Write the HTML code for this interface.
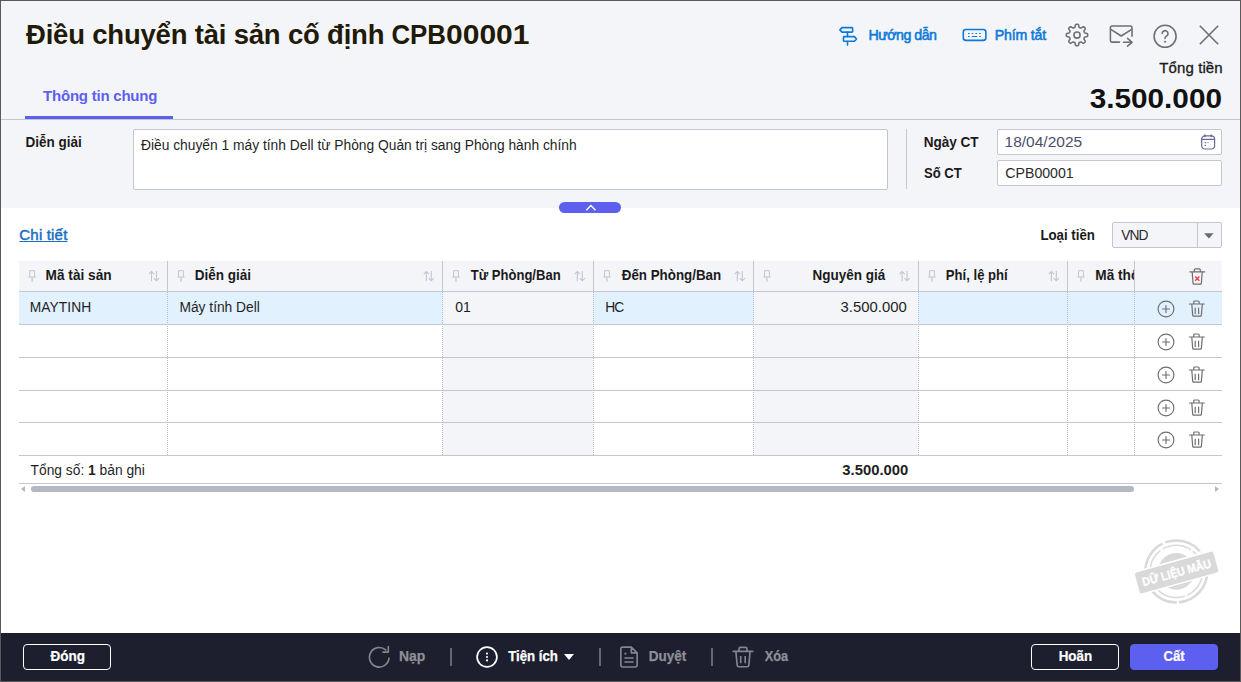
<!DOCTYPE html>
<html lang="vi">
<head>
<meta charset="utf-8">
<title>Điều chuyển tài sản cố định CPB00001</title>
<style>
*{box-sizing:border-box;margin:0;padding:0}
html,body{width:1241px;height:682px;overflow:hidden;background:#fff}
body{font-family:"Liberation Sans","DejaVu Sans",sans-serif;font-size:14px;color:#1f1f1f;position:relative}
#win{position:absolute;left:0;top:0;width:1241px;height:682px;overflow:hidden;background:#fff}
#frame{position:absolute;left:0;top:0;width:1241px;height:682px;border:1px solid #5a5a5a;z-index:50;pointer-events:none}
#hdr{position:absolute;left:0;top:0;width:1241px;height:208px;background:#f4f5f9}
.t{position:absolute;white-space:nowrap;line-height:20px;height:20px}
.b{font-weight:bold}
.r{text-align:right}
#title{left:26px;top:18px;font-size:27.5px;line-height:34px;height:34px;font-weight:bold;color:#1f1b08;letter-spacing:-0.2px}
#tc1{display:inline-block;transform:translateX(-0.6px) scaleX(0.94);transform-origin:left center;letter-spacing:0}
#tc2{display:inline-block;margin-left:-3.4px;transform:scaleX(1.092);transform-origin:left center;letter-spacing:0}
#tab{left:42px;top:86px;font-size:15px;color:#5d5fef;font-weight:bold;letter-spacing:-0.2px}
#tabline{position:absolute;left:25px;top:116px;width:148px;height:3px;background:#5d5fef}
#hline{position:absolute;left:0;top:119px;width:1241px;height:1px;background:#c5c7cf}
.link{color:#0b79d9;font-weight:normal;font-size:14.2px;-webkit-text-stroke:0.55px #0b79d9}
.inp{position:absolute;background:#fff;border:1px solid #c3c6d0;border-radius:2px}
.lbl{font-weight:bold;font-size:13.8px;color:#1a1a1a}
svg{position:absolute;overflow:visible}
/* grid */
#grid{position:absolute;left:19px;top:261px;width:1203px;height:194px}
.hc{position:absolute;top:0;height:30px;background:#f4f5f9;border-right:1px solid #c5c7cf}
.hline{position:absolute;left:0;width:1203px;height:1px;background:#c5c7cf}
.vd{position:absolute;top:31px;width:0;height:163px;border-left:1px dotted #b9bcc6}
.gray{position:absolute;background:#f4f5f9}
.ht{font-weight:bold;font-size:13.8px;color:#1a1a1a;top:5px}
.ct{font-size:13.8px;color:#1f1f1f}
/* footer */
#foot{position:absolute;left:0;top:633px;width:1241px;height:49px;background:#1d1e2e}
.btn{position:absolute;top:11px;height:26px;width:88px;border:1px solid #fff;border-radius:4px}
.bt{position:absolute;top:14px;line-height:20px;height:20px;color:#fff;font-weight:bold;font-size:13.8px;white-space:nowrap;-webkit-text-stroke:0.2px #fff}
.ft{position:absolute;top:14px;line-height:20px;height:20px;font-weight:bold;font-size:13.8px;white-space:nowrap;-webkit-text-stroke:0.25px currentColor}
.sep{position:absolute;top:15px;width:1.500px;height:18px;background:#666775}
/*FIT*/
#tab{letter-spacing:-0.227px!important;left:43.10px!important;right:auto!important}
#tt{letter-spacing:0.116px!important;left:1159.21px!important;right:auto!important}
#total{transform:translateX(1.66px) scaleX(1.1016)!important;transform-origin:left center!important;letter-spacing:0!important;left:1088.00px!important;right:auto!important}
#v2{transform:translateX(1.55px) scaleX(1.1245)!important;transform-origin:left center!important;letter-spacing:0!important;left:1003.00px!important;right:auto!important}
#v3{transform:translateX(1.32px) scaleX(1.0249)!important;transform-origin:left center!important;letter-spacing:0!important;left:1004.00px!important;right:auto!important}
#ctl{letter-spacing:0.180px!important;left:19.36px!important;right:auto!important}
#v4{letter-spacing:-0.921px!important;left:1121.13px!important;right:auto!important}
#c0{letter-spacing:0.066px!important;left:10.73px!important;right:auto!important}
#c1{letter-spacing:-0.014px!important;left:160.48px!important;right:auto!important}
#c2{transform:translateX(1.14px) scaleX(1.0118)!important;transform-origin:left center!important;letter-spacing:0!important;left:435.00px!important;right:auto!important}
#c3{letter-spacing:-0.892px!important;left:586.22px!important;right:auto!important}
#c4{transform:translateX(0.56px) scaleX(1.0772)!important;transform-origin:left center!important;letter-spacing:0!important;left:821.00px!important;right:auto!important}
#sum1{letter-spacing:0.001px!important;left:30.54px!important;right:auto!important}
#sum2{transform:translateX(1.34px) scaleX(1.0744)!important;transform-origin:left center!important;letter-spacing:0!important;left:841.00px!important;right:auto!important}
#hd{letter-spacing:-0.508px!important;left:868.56px!important;right:auto!important}
#pt{letter-spacing:-0.217px!important;left:994.85px!important;right:auto!important}
#l1{transform:translateX(1.58px) scaleX(0.9754)!important;transform-origin:left center!important;letter-spacing:0!important;left:24.00px!important;right:auto!important}
#l2{transform:translateX(1.64px) scaleX(0.9820)!important;transform-origin:left center!important;letter-spacing:0!important;left:922.00px!important;right:auto!important}
#l3{transform:translateX(1.01px) scaleX(0.9469)!important;transform-origin:left center!important;letter-spacing:0!important;left:923.00px!important;right:auto!important}
#l4{transform:translateX(0.39px) scaleX(0.9618)!important;transform-origin:left center!important;letter-spacing:0!important;left:1040.00px!important;right:auto!important}
#h0{transform:translateX(1.58px) scaleX(0.9895)!important;transform-origin:left center!important;letter-spacing:0!important;left:25.00px!important;right:auto!important}
#h1{transform:translateX(0.75px) scaleX(0.9774)!important;transform-origin:left center!important;letter-spacing:0!important;left:175.00px!important;right:auto!important}
#h2{transform:translateX(1.81px) scaleX(0.9447)!important;transform-origin:left center!important;letter-spacing:0!important;left:450.00px!important;right:auto!important}
#h3{transform:translateX(0.76px) scaleX(0.9681)!important;transform-origin:left center!important;letter-spacing:0!important;left:602.00px!important;right:auto!important}
#h4{transform:translateX(0.55px) scaleX(0.9788)!important;transform-origin:left center!important;letter-spacing:0!important;left:793.00px!important;right:auto!important}
#h5{transform:translateX(1.86px) scaleX(0.9486)!important;transform-origin:left center!important;letter-spacing:0!important;left:925.00px!important;right:auto!important}
#f1{transform:translateX(-0.08px) scaleX(1.0103)!important;transform-origin:left center!important;letter-spacing:0!important;left:399.00px!important;right:auto!important}
#f2{transform:translateX(1.17px) scaleX(0.9594)!important;transform-origin:left center!important;letter-spacing:0!important;left:507.00px!important;right:auto!important}
#f3{transform:translateX(0.81px) scaleX(0.9763)!important;transform-origin:left center!important;letter-spacing:0!important;left:648.00px!important;right:auto!important}
#f4{transform:translateX(0.72px) scaleX(0.9245)!important;transform-origin:left center!important;letter-spacing:0!important;left:764.00px!important;right:auto!important}
#b1{transform:translateX(1.43px) scaleX(0.9799)!important;transform-origin:left center!important;letter-spacing:0!important;left:49.00px!important;right:auto!important}
#b2{transform:translateX(0.63px) scaleX(0.9735)!important;transform-origin:left center!important;letter-spacing:0!important;left:1058.00px!important;right:auto!important}
#b3{transform:translateX(0.47px) scaleX(0.9583)!important;transform-origin:left center!important;letter-spacing:0!important;left:1163.00px!important;right:auto!important}
#h6{left:1076px!important;transform:translateX(0.28px) scaleX(0.9895);transform-origin:left center}
/*ENDFIT*/
</style>
</head>
<body>
<div id="win">
  <div id="hdr">
    <div class="t" id="title">Điều chuyển tài sản cố định <span id="tc1">CPB</span><span id="tc2">00001</span></div>
    <div class="t" id="tab">Thông tin chung</div>
    <div id="tabline"></div>
    <div id="hline"></div>
    <svg style="left:837px;top:25px" width="22" height="22" viewBox="0 0 22 22" fill="none" stroke="#0b79d9" stroke-width="1.6" stroke-linejoin="round" stroke-linecap="round">
      <path d="M5 2.65H14.9a.75 .75 0 0 1 .75 .75V6.4a.75 .75 0 0 1-.75 .75H5L2.900 4.900z"/>
      <path d="M7.2 11.65H17.4L19.5 13.95L17.4 16.25H7.2a.75 .75 0 0 1-.75-.75V12.4a.75 .75 0 0 1 .75-.75z"/>
      <path d="M10.5 7.400V11.400M10.5 16.500V20.100"/>
    </svg>
    <div class="t link" id="hd" style="left:868px;top:25px">Hướng dẫn</div>
    <svg style="left:962px;top:28px" width="25" height="14" viewBox="0 0 25 14" fill="none" stroke="#0b79d9" stroke-width="1.6">
      <rect x="1.3" y="1.5" width="22.6" height="10.9" rx="2.6"/>
      <path d="M6 5.500h1.600M9.700 5.500h1.600M13.500 5.500h1.600M17.200 5.500h1.600M6 8.500h1.600M9.700 8.500h5.500M17.200 8.500h1.600" stroke-width="1.200"/>
    </svg>
    <div class="t link" id="pt" style="left:994px;top:25px">Phím tắt</div>
    <svg id="gear" style="left:1065px;top:23px" width="24" height="24" viewBox="0 0 24 24" fill="none" stroke="#6f6f6f" stroke-width="1.55" stroke-linejoin="round">
      <circle cx="12" cy="12" r="3.1"/>
      <path d="M12.00 1.30L12.52 1.33L13.04 1.44L13.51 1.84L13.80 2.93L14.00 4.02L14.29 4.45L14.63 4.64L14.98 4.79L15.34 4.94L15.72 5.04L16.23 4.94L17.14 4.31L18.12 3.75L18.73 3.80L19.18 4.08L19.57 4.43L19.92 4.82L20.20 5.27L20.25 5.88L19.69 6.86L19.06 7.77L18.96 8.28L19.06 8.66L19.21 9.02L19.36 9.37L19.55 9.71L19.98 10.00L21.07 10.20L22.16 10.49L22.56 10.96L22.67 11.48L22.70 12.00L22.67 12.52L22.56 13.04L22.16 13.51L21.07 13.80L19.98 14.00L19.55 14.29L19.36 14.63L19.21 14.98L19.06 15.34L18.96 15.72L19.06 16.23L19.69 17.14L20.25 18.12L20.20 18.73L19.92 19.18L19.57 19.57L19.18 19.92L18.73 20.20L18.12 20.25L17.14 19.69L16.23 19.06L15.72 18.96L15.34 19.06L14.98 19.21L14.63 19.36L14.29 19.55L14.00 19.98L13.80 21.07L13.51 22.16L13.04 22.56L12.52 22.67L12.00 22.70L11.48 22.67L10.96 22.56L10.49 22.16L10.20 21.07L10.00 19.98L9.71 19.55L9.37 19.36L9.02 19.21L8.66 19.06L8.28 18.96L7.77 19.06L6.86 19.69L5.88 20.25L5.27 20.20L4.82 19.92L4.43 19.57L4.08 19.18L3.80 18.73L3.75 18.12L4.31 17.14L4.94 16.23L5.04 15.72L4.94 15.34L4.79 14.98L4.64 14.63L4.45 14.29L4.02 14.00L2.93 13.80L1.84 13.51L1.44 13.04L1.33 12.52L1.30 12.00L1.33 11.48L1.44 10.96L1.84 10.49L2.93 10.20L4.02 10.00L4.45 9.71L4.64 9.37L4.79 9.02L4.94 8.66L5.04 8.28L4.94 7.77L4.31 6.86L3.75 5.88L3.80 5.27L4.08 4.82L4.43 4.43L4.82 4.08L5.27 3.80L5.88 3.75L6.86 4.31L7.77 4.94L8.28 5.04L8.66 4.94L9.02 4.79L9.37 4.64L9.71 4.45L10.00 4.02L10.20 2.93L10.49 1.84L10.96 1.44L11.48 1.33z"/>
    </svg>
    <svg id="mail" style="left:1108px;top:24px" width="26" height="24" viewBox="0 0 26 24" fill="none" stroke="#6f6f6f" stroke-width="1.55" stroke-linejoin="round" stroke-linecap="round"><g transform="translate(0.9 0)">
      <path d="M23.100 12.200V3.500a1.500 1.500 0 0 0-1.500-1.500H3a1.500 1.500 0 0 0-1.500 1.500v13.100a1.500 1.500 0 0 0 1.500 1.500h7.600"/>
      <path d="M1.900 5.300L12.300 12l10.500-6.700"/>
      <path d="M14.600 18.300h8.400M18.600 14.400l4.600 3.900-4.600 3.900"/>
    </g></svg>
    <svg id="help" style="left:1153px;top:24px" width="24" height="24" viewBox="0 0 24 24" fill="none" stroke="#6f6f6f" stroke-width="1.55" stroke-linecap="round"><g transform="translate(0.0 0.3)">
      <circle cx="12.100" cy="12" r="11"/>
      <path d="M9.200 9.200a2.900 2.900 0 1 1 4.300 2.600c-.9.500-1.500 1-1.500 2.100v.3"/>
      <circle cx="12" cy="17.400" r="0.700" fill="#6f6f6f" stroke-width="0.700"/>
    </g></svg>
    <svg id="close" style="left:1199px;top:25px" width="20" height="20" viewBox="0 0 20 20" fill="none" stroke="#6f6f6f" stroke-width="1.6">
      <path d="M0.8 0.8l18.4 18.4M19.2 0.8L0.8 19.2"/>
    </svg>
    <div class="t" id="tt" style="left:1158px;top:58px;font-size:15px;letter-spacing:0.15px;color:#1a1a1a;-webkit-text-stroke:0.3px #1a1a1a">Tổng tiền</div>
    <div class="t r b" id="total" style="left:1090px;top:82px;font-size:27px;line-height:34px;height:34px;color:#111">3.500.000</div>
    <!--TOPRIGHT-->
    <div class="t lbl" id="l1" style="left:25px;top:133px">Diễn giải</div>
    <div class="inp" style="left:133px;top:129px;width:755px;height:61px"></div>
    <div class="t" id="ta" style="left:141px;top:136px;font-size:13.8px;color:#1f1f1f">Điều chuyển 1 máy tính Dell từ Phòng Quản trị sang Phòng hành chính</div>
    <div style="position:absolute;left:906px;top:129px;width:1px;height:60px;background:#c5c7cf"></div>
    <div class="t lbl" id="l2" style="left:923px;top:133px">Ngày CT</div>
    <div class="inp" style="left:997px;top:129px;width:225px;height:26px"></div>
    <div class="t" id="v2" style="left:1005px;top:133px;font-size:13.8px;color:#4b4f6e">18/04/2025</div>
    <svg id="cal" style="left:1200px;top:134px" width="16" height="16" viewBox="0 0 16 16" fill="none" stroke="#666c92" stroke-width="1.2" stroke-linecap="round">
      <rect x="1.7" y="1.9" width="12.9" height="13.1" rx="3.2"/>
      <path d="M1.700 5.300h12.900"/>
      <path d="M4.900 0.900v1.600M11.100 0.900v1.600" stroke-width="1.500"/>
      <path d="M5.100 8.700h0.500M5.100 11.300h0.500" stroke-width="1.300"/>
      <path d="M7.700 8.700h0.500" stroke-width="1.300" stroke="#a9adc4"/>
    </svg>
    <div class="t lbl" id="l3" style="left:923px;top:164px">Số CT</div>
    <div class="inp" style="left:997px;top:160px;width:225px;height:26px"></div>
    <div class="t" id="v3" style="left:1005px;top:164px;font-size:13.8px;color:#2a2a2a">CPB00001</div>
    <div style="position:absolute;left:559px;top:202px;width:62px;height:11px;background:#5d5fef;border-radius:5.5px;z-index:5"></div>
    <svg style="left:584px;top:204px;z-index:6" width="13" height="8" viewBox="0 0 13 8" fill="none" stroke="#fff" stroke-width="1.4" stroke-linejoin="miter"><path d="M2.300 6.300L6.900 1.600l4.600 4.700"/></svg>
    <!--FORM-->
  </div>
  <div class="t" id="ctl" style="left:19px;top:225px;font-size:15px;color:#1a6fc4;text-decoration:underline;-webkit-text-stroke:0.5px #1a6fc4">Chi tiết</div>
  <div class="t lbl" id="l4" style="left:1040px;top:226px">Loại tiền</div>
  <div class="inp" style="left:1112px;top:222px;width:110px;height:26px;background:#f4f5f9"></div>
  <div style="position:absolute;left:1197px;top:223px;width:1px;height:24px;background:#c3c6d0"></div>
  <div class="t" id="v4" style="left:1120px;top:226px;font-size:13.8px;color:#2a2a2a">VND</div>
  <svg style="left:1204px;top:233px" width="10" height="6" viewBox="0 0 10 6"><g transform="translate(0.2 0.2)"><path d="M0 0h9.400L4.700 5.400z" fill="#6a6a6a"/></g></svg>
  <div id="grid">
  <div class="gray" style="left:0;top:0;width:1203px;height:30px"></div>
  <div style="position:absolute;left:0;top:31px;width:1203px;height:32px;background:#e2f1fe"></div>
  <div class="gray" style="left:424px;top:31px;width:150px;height:163px"></div>
  <div class="gray" style="left:735px;top:31px;width:164px;height:163px"></div>
  <div style="position:absolute;left:1116px;top:64px;width:87px;height:130px;background:#fff"></div>
  <svg style="left:9px;top:9px" width="9" height="13" viewBox="0 0 9 13" fill="none" stroke="#c3c5cb" stroke-width="1"><g transform="translate(0.2 0.0)"><path d="M1.500 6.800V0.700h4.900V6.800M0.200 7h7.500"/><path d="M3.950 7.300v4.400" stroke-width="1.200"/></g></svg><div class="t ht" id="h0" style="left:26px">Mã tài sản</div><svg style="left:129px;top:10px" width="11" height="11" viewBox="0 0 11 11" fill="none" stroke="#c3c6ce" stroke-width="1.100" stroke-linejoin="miter"><g transform="translate(0.55 0.0)"><path d="M3 10.200V0.600M0.400 3.200L3 0.500L5.600 3.200M7.950 0V9.700M5.350 7.100L7.950 9.800L10.550 7.100"/></g></svg>
  <div style="position:absolute;left:148px;top:0;width:1px;height:30px;background:#c5c7cf"></div>
  <div class="vd" style="left:148px"></div>
  <svg style="left:158px;top:9px" width="9" height="13" viewBox="0 0 9 13" fill="none" stroke="#c3c5cb" stroke-width="1"><path d="M1.500 6.800V0.700h4.900V6.800M0.200 7h7.500"/><path d="M3.950 7.300v4.400" stroke-width="1.200"/></svg><div class="t ht" id="h1" style="left:174px">Diễn giải</div><svg style="left:404px;top:10px" width="11" height="11" viewBox="0 0 11 11" fill="none" stroke="#c3c6ce" stroke-width="1.100" stroke-linejoin="miter"><g transform="translate(0.35 0.0)"><path d="M3 10.200V0.600M0.400 3.200L3 0.500L5.600 3.200M7.950 0V9.700M5.350 7.100L7.950 9.800L10.550 7.100"/></g></svg>
  <div style="position:absolute;left:423px;top:0;width:1px;height:30px;background:#c5c7cf"></div>
  <div class="vd" style="left:423px"></div>
  <svg style="left:433px;top:9px" width="9" height="13" viewBox="0 0 9 13" fill="none" stroke="#c3c5cb" stroke-width="1"><path d="M1.500 6.800V0.700h4.900V6.800M0.200 7h7.500"/><path d="M3.950 7.300v4.400" stroke-width="1.200"/></svg><div class="t ht" id="h2" style="left:449px">Từ Phòng/Ban</div><svg style="left:555px;top:10px" width="11" height="11" viewBox="0 0 11 11" fill="none" stroke="#c3c6ce" stroke-width="1.100" stroke-linejoin="miter"><g transform="translate(0.35 0.0)"><path d="M3 10.200V0.600M0.400 3.200L3 0.500L5.600 3.200M7.950 0V9.700M5.350 7.100L7.950 9.800L10.550 7.100"/></g></svg>
  <div style="position:absolute;left:574px;top:0;width:1px;height:30px;background:#c5c7cf"></div>
  <div class="vd" style="left:574px"></div>
  <svg style="left:584px;top:9px" width="9" height="13" viewBox="0 0 9 13" fill="none" stroke="#c3c5cb" stroke-width="1"><path d="M1.500 6.800V0.700h4.900V6.800M0.200 7h7.500"/><path d="M3.950 7.300v4.400" stroke-width="1.200"/></svg><div class="t ht" id="h3" style="left:600px">Đến Phòng/Ban</div><svg style="left:715px;top:10px" width="11" height="11" viewBox="0 0 11 11" fill="none" stroke="#c3c6ce" stroke-width="1.100" stroke-linejoin="miter"><g transform="translate(0.35 0.0)"><path d="M3 10.200V0.600M0.400 3.200L3 0.500L5.600 3.200M7.950 0V9.700M5.350 7.100L7.950 9.800L10.550 7.100"/></g></svg>
  <div style="position:absolute;left:734px;top:0;width:1px;height:30px;background:#c5c7cf"></div>
  <div class="vd" style="left:734px"></div>
  <svg style="left:744px;top:9px" width="9" height="13" viewBox="0 0 9 13" fill="none" stroke="#c3c5cb" stroke-width="1"><path d="M1.500 6.800V0.700h4.900V6.800M0.200 7h7.500"/><path d="M3.950 7.300v4.400" stroke-width="1.200"/></svg><div class="t ht" id="h4" style="left:793px">Nguyên giá</div><svg style="left:880px;top:10px" width="11" height="11" viewBox="0 0 11 11" fill="none" stroke="#c3c6ce" stroke-width="1.100" stroke-linejoin="miter"><g transform="translate(0.1 0.0)"><path d="M3 10.200V0.600M0.400 3.200L3 0.500L5.600 3.200M7.950 0V9.700M5.350 7.100L7.950 9.800L10.550 7.100"/></g></svg>
  <div style="position:absolute;left:899px;top:0;width:1px;height:30px;background:#c5c7cf"></div>
  <div class="vd" style="left:899px"></div>
  <svg style="left:909px;top:9px" width="9" height="13" viewBox="0 0 9 13" fill="none" stroke="#c3c5cb" stroke-width="1"><path d="M1.500 6.800V0.700h4.900V6.800M0.200 7h7.500"/><path d="M3.950 7.300v4.400" stroke-width="1.200"/></svg><div class="t ht" id="h5" style="left:925px">Phí, lệ phí</div><svg style="left:1029px;top:10px" width="11" height="11" viewBox="0 0 11 11" fill="none" stroke="#c3c6ce" stroke-width="1.100" stroke-linejoin="miter"><g transform="translate(0.35 0.0)"><path d="M3 10.200V0.600M0.400 3.200L3 0.500L5.600 3.200M7.950 0V9.700M5.350 7.100L7.950 9.800L10.550 7.100"/></g></svg>
  <div style="position:absolute;left:1048px;top:0;width:1px;height:30px;background:#c5c7cf"></div>
  <div class="vd" style="left:1048px"></div>
  <svg style="left:1058px;top:9px" width="9" height="13" viewBox="0 0 9 13" fill="none" stroke="#c3c5cb" stroke-width="1"><path d="M1.500 6.800V0.700h4.900V6.800M0.200 7h7.500"/><path d="M3.950 7.300v4.400" stroke-width="1.200"/></svg><div class="t ht" id="h6" style="left:1074px">Mã thống kê</div>
  <div style="position:absolute;left:1115px;top:0;width:1px;height:30px;background:#c5c7cf"></div>
  <div class="vd" style="left:1115px"></div>
  <div class="gray" style="left:1116px;top:0;width:87px;height:30px"></div>
  <div style="position:absolute;left:1115px;top:0;width:1px;height:30px;background:#c5c7cf"></div>
  <div class="vd" style="left:1115px"></div>
  <div class="hline" style="top:30px"></div>
  <div class="hline" style="top:63px"></div>
  <div class="hline" style="top:96px"></div>
  <div class="hline" style="top:129px"></div>
  <div class="hline" style="top:161px"></div>
  <div class="hline" style="top:194px"></div>
  <div class="t ct" id="c0" style="left:11px;top:37px">MAYTINH</div>
  <div class="t ct" id="c1" style="left:160px;top:37px">Máy tính Dell</div>
  <div class="t ct" id="c2" style="left:435px;top:37px">01</div>
  <div class="t ct" id="c3" style="left:586px;top:37px">HC</div>
  <div class="t ct" id="c4" style="left:822px;top:37px">3.500.000</div>
  <svg style="left:1169px;top:6px" width="18" height="19" viewBox="0 0 18 19" fill="none" stroke="#6f6f6f" stroke-width="1.2" stroke-linecap="round" stroke-linejoin="round"><g transform="translate(0.3 0.0)"><path d="M1.600 4.900H16.400M6 4.900V2.900a1 1 0 0 1 1-1h4a1 1 0 0 1 1 1V4.900M3.900 5.100L4.700 16.100a1 1 0 0 0 1 .95H12.100a1 1 0 0 0 1-.95L13.900 5.100"/><path d="M6.900 9.500l4.200 4.200M11.100 9.500l-4.200 4.200" stroke="#f23a45" stroke-width="1.400" stroke-linecap="butt"/></g></svg>
  <svg style="left:1138px;top:39px" width="18" height="18" viewBox="0 0 18 18" fill="none" stroke="#6f6f6f" stroke-width="1.15" stroke-linecap="round"><circle cx="9" cy="9" r="7.9"/><path d="M9 5.500v7M5.500 9h7"/></svg>
  <svg style="left:1169px;top:38px" width="18" height="18" viewBox="0 0 18 18" fill="none" stroke="#6f6f6f" stroke-width="1.2" stroke-linecap="round" stroke-linejoin="round"><path d="M1.400 5H16.300M5.800 5V3a1 1 0 0 1 1-1h3.300a1 1 0 0 1 1 1V5M3.800 5.200L4.700 16.100a1 1 0 0 0 1 .95H12.400a1 1 0 0 0 1-.95L14.300 5.200M7.200 9.200v5.500M10.600 9.200v5.500"/></svg>
  <svg style="left:1138px;top:72px" width="18" height="18" viewBox="0 0 18 18" fill="none" stroke="#6f6f6f" stroke-width="1.15" stroke-linecap="round"><circle cx="9" cy="9" r="7.9"/><path d="M9 5.500v7M5.500 9h7"/></svg>
  <svg style="left:1169px;top:71px" width="18" height="18" viewBox="0 0 18 18" fill="none" stroke="#6f6f6f" stroke-width="1.2" stroke-linecap="round" stroke-linejoin="round"><path d="M1.400 5H16.300M5.800 5V3a1 1 0 0 1 1-1h3.300a1 1 0 0 1 1 1V5M3.800 5.200L4.700 16.100a1 1 0 0 0 1 .95H12.400a1 1 0 0 0 1-.95L14.300 5.200M7.200 9.200v5.500M10.600 9.200v5.500"/></svg>
  <svg style="left:1138px;top:105px" width="18" height="18" viewBox="0 0 18 18" fill="none" stroke="#6f6f6f" stroke-width="1.15" stroke-linecap="round"><circle cx="9" cy="9" r="7.9"/><path d="M9 5.500v7M5.500 9h7"/></svg>
  <svg style="left:1169px;top:104px" width="18" height="18" viewBox="0 0 18 18" fill="none" stroke="#6f6f6f" stroke-width="1.2" stroke-linecap="round" stroke-linejoin="round"><path d="M1.400 5H16.300M5.800 5V3a1 1 0 0 1 1-1h3.300a1 1 0 0 1 1 1V5M3.800 5.200L4.700 16.100a1 1 0 0 0 1 .95H12.400a1 1 0 0 0 1-.95L14.300 5.200M7.200 9.200v5.500M10.600 9.200v5.500"/></svg>
  <svg style="left:1138px;top:138px" width="18" height="18" viewBox="0 0 18 18" fill="none" stroke="#6f6f6f" stroke-width="1.15" stroke-linecap="round"><circle cx="9" cy="9" r="7.9"/><path d="M9 5.500v7M5.500 9h7"/></svg>
  <svg style="left:1169px;top:137px" width="18" height="18" viewBox="0 0 18 18" fill="none" stroke="#6f6f6f" stroke-width="1.2" stroke-linecap="round" stroke-linejoin="round"><path d="M1.400 5H16.300M5.800 5V3a1 1 0 0 1 1-1h3.300a1 1 0 0 1 1 1V5M3.800 5.200L4.700 16.100a1 1 0 0 0 1 .95H12.400a1 1 0 0 0 1-.95L14.300 5.200M7.200 9.200v5.500M10.600 9.200v5.500"/></svg>
  <svg style="left:1138px;top:170px" width="18" height="18" viewBox="0 0 18 18" fill="none" stroke="#6f6f6f" stroke-width="1.15" stroke-linecap="round"><circle cx="9" cy="9" r="7.9"/><path d="M9 5.500v7M5.500 9h7"/></svg>
  <svg style="left:1169px;top:169px" width="18" height="18" viewBox="0 0 18 18" fill="none" stroke="#6f6f6f" stroke-width="1.2" stroke-linecap="round" stroke-linejoin="round"><path d="M1.400 5H16.300M5.800 5V3a1 1 0 0 1 1-1h3.300a1 1 0 0 1 1 1V5M3.800 5.200L4.700 16.100a1 1 0 0 0 1 .95H12.400a1 1 0 0 0 1-.95L14.300 5.200M7.200 9.200v5.500M10.600 9.200v5.500"/></svg>
  </div>
  <div class="t ct" id="sum1" style="left:30px;top:461px">Tổng số: <b>1</b> bản ghi</div>
  <div class="t ct b" id="sum2" style="left:842px;top:461px">3.500.000</div>
  <div style="position:absolute;left:19px;top:483px;width:1203px;height:1px;background:#c5c7cf"></div>
  <div style="position:absolute;left:31px;top:486px;width:1103px;height:6px;border-radius:3px;background:#b4b8c2"></div>
  <svg style="left:21px;top:486px" width="4" height="6" viewBox="0 0 4 6"><path d="M4 0v6L0 3z" fill="#b4b8c2"/></svg>
  <svg style="left:1215px;top:486px" width="4" height="6" viewBox="0 0 4 6"><path d="M0 0v6l4-3z" fill="#b4b8c2"/></svg>
  <div id="stamp" style="position:absolute;left:1135px;top:536px;width:86px;height:72px">
    <svg style="left:0;top:0" width="86" height="72" viewBox="0 0 86 72" fill="none">
      <g transform="translate(41.300 35.400)">
        <circle r="31" stroke="#d9d9d9" stroke-width="2.500" stroke-dasharray="46 2 30 1.500 52 3 38 2"/>
        <circle r="26.200" stroke="#d9d9d9" stroke-width="1.500" stroke-dasharray="30 2 44 1.500 28 3"/>
        <circle r="18.300" fill="#d9d9d9"/>
        <g transform="rotate(-15.600)">
          <rect x="-42" y="-11.200" width="84" height="24.600" rx="3" fill="#fff"/>
          <rect x="-40.700" y="-9.700" width="81.400" height="21.600" rx="2" fill="#d9d9d9"/>
          <text x="0" y="5.400" text-anchor="middle" font-family="Liberation Sans, sans-serif" font-weight="bold" font-size="12" fill="#fff" stroke="#fff" stroke-width="0.300" textLength="71" lengthAdjust="spacingAndGlyphs">DỮ LIỆU MẪU</text>
        </g>
      </g>
    </svg>
  </div>
  <!--BODY-->
  <div id="foot">
    <div class="btn" style="left:23px"></div><div class="bt" id="b1" style="left:49px">Đóng</div>
    <svg style="left:368px;top:12px" width="23" height="24" viewBox="0 0 23 24" fill="none" stroke="#84858f" stroke-width="1.650" stroke-linecap="round" stroke-linejoin="round"><path d="M21 13.200a9.800 9.800 0 1 1-3.300-8.300M20.300 1.600v5.500h-5.300"/></svg>
    <div class="ft" id="f1" style="left:399px;color:#8e8f9a">Nạp</div>
    <div class="sep" style="left:450px"></div>
    <svg style="left:476px;top:13px" width="22" height="22" viewBox="0 0 22 22" fill="none" stroke="#fff" stroke-width="1.700"><circle cx="11" cy="11" r="9.900"/><g fill="#fff" stroke="none"><circle cx="11" cy="7.600" r="1.050"/><circle cx="11" cy="11" r="1.050"/><circle cx="11" cy="14.400" r="1.050"/></g></svg>
    <div class="ft" id="f2" style="left:507px;color:#fff">Tiện ích</div>
    <svg style="left:564px;top:21px" width="10" height="6" viewBox="0 0 10 6"><path d="M0 0h10L5 6z" fill="#fff"/></svg>
    <div class="sep" style="left:599px"></div>
    <svg style="left:619px;top:13px" width="20" height="23" viewBox="0 0 20 23" fill="none" stroke="#84858f" stroke-width="1.650" stroke-linecap="round" stroke-linejoin="round"><path d="M12.300 1.050H3.600a1.750 1.750 0 0 0-1.750 1.750V19.200a1.750 1.750 0 0 0 1.750 1.750H16.400a1.750 1.750 0 0 0 1.750-1.750V6.900zM12.300 1.300v5.500h5.700"/><path d="M5.400 12h9.200M5.400 16h9.200M5.400 7.600h2" stroke-linecap="butt"/></svg>
    <div class="ft" id="f3" style="left:648px;color:#8e8f9a">Duyệt</div>
    <div class="sep" style="left:711px"></div>
    <svg style="left:732px;top:13px" width="22" height="23" viewBox="0 0 22 23" fill="none" stroke="#84858f" stroke-width="1.650" stroke-linecap="round" stroke-linejoin="round"><path d="M1.200 5.400H20.800M7 5.200V2.800a1.500 1.500 0 0 1 1.500-1.500h5a1.500 1.500 0 0 1 1.500 1.500V5.200M3.900 5.700l1.300 13.600a1.600 1.600 0 0 0 1.600 1.400h8.400a1.600 1.600 0 0 0 1.600-1.400l1.300-13.600"/><path d="M8.700 9.900v7.400M13.200 9.900v7.400" stroke-linecap="butt"/></svg>
    <div class="ft" id="f4" style="left:764px;color:#8e8f9a">Xóa</div>
    <div class="btn" style="left:1031px"></div><div class="bt" id="b2" style="left:1058px">Hoãn</div>
    <div class="btn" style="left:1130px;background:#5d5fef;border-color:#5d5fef"></div><div class="bt" id="b3" style="left:1163px">Cất</div>
  </div>
  <div id="frame"></div>
</div>
</body>
</html>
